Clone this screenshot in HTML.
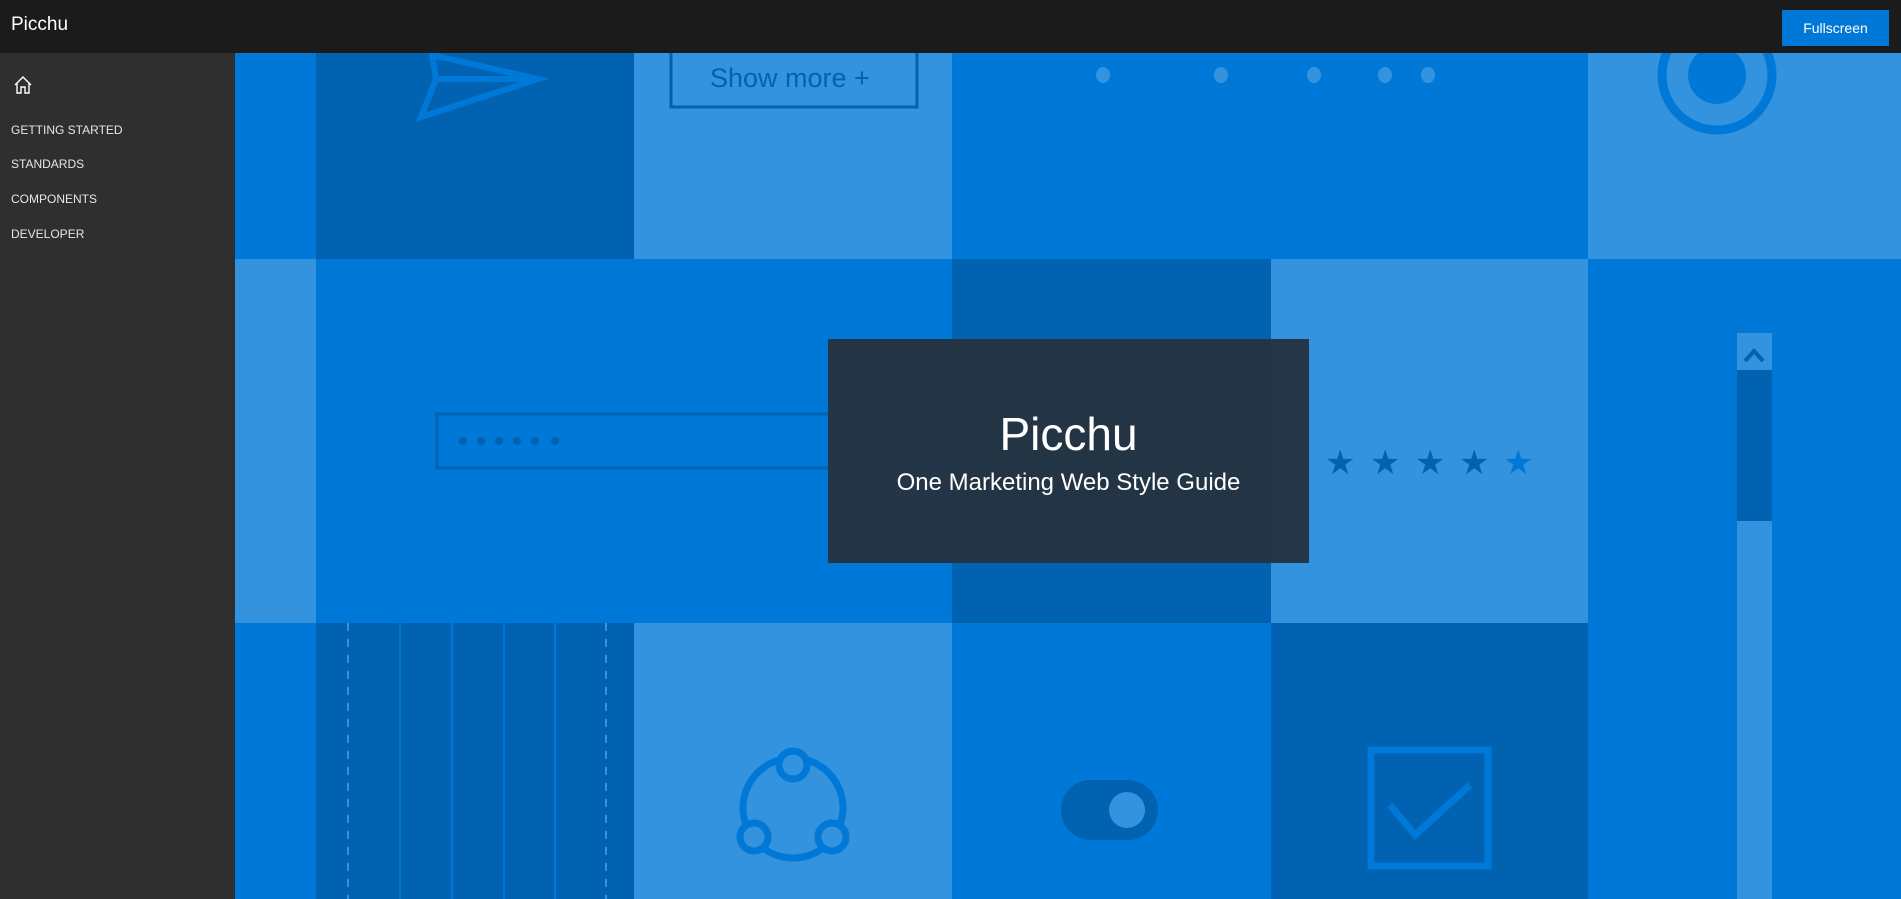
<!DOCTYPE html>
<html><head><meta charset="utf-8"><style>
*{margin:0;padding:0;box-sizing:border-box}
body{width:1901px;height:899px;overflow:hidden;background:#2d2d2d;font-family:"Segoe UI","Liberation Sans",sans-serif;position:relative}
.top{position:absolute;left:0;top:0;width:1901px;height:53px;background:#1b1b1b;z-index:5}
.top .t{position:absolute;left:11px;top:14px;color:#fff;font-size:19px}
.btn{position:absolute;left:1782px;top:10px;width:107px;height:36px;background:#0078d7;color:#fff;font-size:14px;text-align:center;line-height:36px}
.side{position:absolute;left:0;top:53px;width:235px;height:846px;background:#2f2f2f}
.side div{position:absolute;left:11px;color:#e6e6e6;font-size:12px}
.tile{position:absolute}
.m{background:#0078d7}.d{background:#0062b0}.l{background:#3393df}
svg{position:absolute;left:0;top:0}
.ov{position:absolute;left:828px;top:339px;width:481px;height:224px;background:rgba(38,48,60,.93);color:#fff;text-align:center}
</style></head><body>
<div class="top"><div class="t">Picchu</div><div class="btn">Fullscreen</div></div>
<div class="side">
<svg width="30" height="30" style="left:12px;top:18px" viewBox="0 0 30 30"><path d="M3 14 L11 6 L19 14 M5 12 V22 H9 V16 H13 V22 H17 V12" fill="none" stroke="#fff" stroke-width="1.4"/></svg>
<div style="top:70px">GETTING STARTED</div>
<div style="top:104px">STANDARDS</div>
<div style="top:139px">COMPONENTS</div>
<div style="top:174px">DEVELOPER</div>
</div>
<div class="tile m" style="left:235px;top:53px;width:81px;height:206px"></div>
<div class="tile d" style="left:316px;top:53px;width:318px;height:206px"></div>
<div class="tile l" style="left:634px;top:53px;width:318px;height:206px"></div>
<div class="tile m" style="left:952px;top:53px;width:636px;height:206px"></div>
<div class="tile l" style="left:1588px;top:53px;width:313px;height:206px"></div>
<div class="tile l" style="left:235px;top:259px;width:81px;height:364px"></div>
<div class="tile m" style="left:316px;top:259px;width:636px;height:364px"></div>
<div class="tile d" style="left:952px;top:259px;width:319px;height:364px"></div>
<div class="tile l" style="left:1271px;top:259px;width:317px;height:364px"></div>
<div class="tile m" style="left:1588px;top:259px;width:313px;height:640px"></div>
<div class="tile m" style="left:235px;top:623px;width:81px;height:276px"></div>
<div class="tile d" style="left:316px;top:623px;width:318px;height:276px"></div>
<div class="tile l" style="left:634px;top:623px;width:318px;height:276px"></div>
<div class="tile m" style="left:952px;top:623px;width:319px;height:276px"></div>
<div class="tile d" style="left:1271px;top:623px;width:317px;height:276px"></div>
<svg width="1901" height="899">
<path d="M432 55 L538 79 L421 117 L436 79 Z M436 79 H538" fill="none" stroke="#0078d7" stroke-width="6" stroke-linejoin="miter"/>
<rect x="671" y="50" width="246" height="57" fill="none" stroke="#0062b0" stroke-width="3"/>
<text x="710" y="87" font-family="Segoe UI, Liberation Sans, sans-serif" font-size="27" fill="#0062b0">Show more +</text>
<g fill="#3393df"><ellipse cx="1103" cy="75" rx="7" ry="8"/><ellipse cx="1221" cy="75" rx="7" ry="8"/><ellipse cx="1314" cy="75" rx="7" ry="8"/><ellipse cx="1385" cy="75" rx="7" ry="8"/><ellipse cx="1428" cy="75" rx="7" ry="8"/></g>
<circle cx="1717" cy="75" r="55" fill="none" stroke="#0078d7" stroke-width="9"/>
<circle cx="1717" cy="75" r="29" fill="#0078d7"/>
<rect x="437" y="414" width="411" height="54" fill="none" stroke="#0062b0" stroke-width="3"/>
<g fill="#0062b0"><circle cx="463" cy="441" r="4"/><circle cx="481" cy="441" r="4"/><circle cx="499" cy="441" r="4"/><circle cx="517" cy="441" r="4"/><circle cx="535" cy="441" r="4"/><circle cx="555" cy="441" r="4"/></g>
<rect x="999" y="414" width="226" height="54" fill="none" stroke="#0078d7" stroke-width="2"/>
<g fill="#0062b0" font-size="34" font-family="DejaVu Sans, sans-serif"><text x="1325" y="474">★</text><text x="1370" y="474">★</text><text x="1415" y="474">★</text><text x="1459" y="474">★</text></g>
<text x="1503" y="474" fill="#0078d7" font-size="34" font-family="DejaVu Sans, sans-serif">★</text>
<rect x="1737" y="333" width="35" height="566" fill="#3393df"/>
<rect x="1737" y="370" width="35" height="151" fill="#0062b0"/>
<path d="M1745 361 L1754 351 L1763 361" fill="none" stroke="#0062b0" stroke-width="4"/>
<g stroke="#0078d7" stroke-width="2"><line x1="348" y1="623" x2="348" y2="899" stroke-dasharray="8 8" stroke="#3393df"/><line x1="400" y1="623" x2="400" y2="899"/><line x1="452" y1="623" x2="452" y2="899"/><line x1="504" y1="623" x2="504" y2="899"/><line x1="555" y1="623" x2="555" y2="899"/><line x1="606" y1="623" x2="606" y2="899" stroke-dasharray="8 8" stroke="#3393df"/></g>
<g fill="none" stroke="#0078d7" stroke-width="7"><circle cx="793" cy="808" r="50"/></g>
<g fill="#3393df" stroke="#0078d7" stroke-width="7"><circle cx="793" cy="765" r="14"/><circle cx="754" cy="837" r="14"/><circle cx="832" cy="837" r="14"/></g>
<rect x="1061" y="780" width="97" height="60" rx="30" fill="#0062b0"/>
<circle cx="1127" cy="810" r="18" fill="#3393df"/>
<rect x="1371" y="750" width="117" height="116" fill="none" stroke="#0078d7" stroke-width="7"/>
<path d="M1390 805 L1415 835 L1470 785" fill="none" stroke="#0078d7" stroke-width="7"/>
</svg>
<div class="ov">
<div style="position:absolute;left:0;right:0;top:68px;font-size:46px;font-weight:300">Picchu</div>
<div style="position:absolute;left:0;right:0;top:130px;font-size:24px;font-weight:300">One Marketing Web Style Guide</div>
</div>
</body></html>
